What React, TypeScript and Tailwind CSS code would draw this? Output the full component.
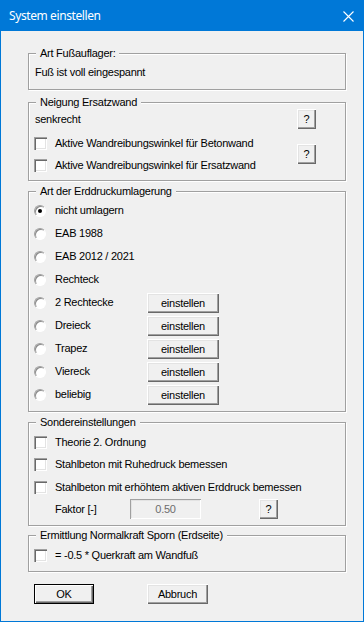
import React from 'react';

type GroupProps = {
    title: string;
    className?: string;
    children?: React.ReactNode;
};

function Group({ title, className = '', children }: GroupProps) {
    return (
        <div className={`relative border border-[#a0a0a0] shadow-[inset_1px_1px_0_#fff,1px_1px_0_#fff] ${className}`}>
            <span className="absolute -top-[8px] left-[7px] bg-[#f0f0f0] px-[4px] leading-[14px]">{title}</span>
            {children}
        </div>
    );
}

function Button({ label, className = '', isDefault = false }: { label: string; className?: string; isDefault?: boolean }) {
    const frame = isDefault
        ? 'border border-black shadow-[inset_1px_1px_0_#fff,inset_-1px_-1px_0_#696969,inset_-2px_-2px_0_#a0a0a0]'
        : 'shadow-[inset_1px_1px_0_#fff,inset_-1px_-1px_0_#696969,inset_-2px_-2px_0_#a0a0a0,inset_2px_2px_0_#e3e3e3]';
    return (
        <div className={`flex h-[20px] shrink-0 items-center justify-center bg-[#f0f0f0] leading-none ${frame} ${className}`}>
            {label}
        </div>
    );
}

function CheckBox() {
    return (
        <span className="block size-[13px] shrink-0 bg-white shadow-[inset_1px_1px_0_#a0a0a0,inset_2px_2px_0_#696969,inset_-1px_-1px_0_#fff,inset_-2px_-2px_0_#e3e3e3]" />
    );
}

function Radio({ checked = false }: { checked?: boolean }) {
    return (
        <span className="flex size-[12px] shrink-0 items-center justify-center rounded-full border border-t-[#a0a0a0] border-r-white border-b-white border-l-[#a0a0a0] bg-white shadow-[inset_1px_1px_0_#8a8a8a]">
            {checked && <span className="block size-[4px] rounded-full bg-black" />}
        </span>
    );
}

function CheckRow({ label, className = '' }: { label: string; className?: string }) {
    return (
        <div className={`flex items-center pl-[5px] ${className}`}>
            <CheckBox />
            <span className="ml-[8px] whitespace-nowrap">{label}</span>
        </div>
    );
}

const radios: { label: string; button?: boolean; checked?: boolean }[] = [
    { label: 'nicht umlagern', checked: true },
    { label: 'EAB 1988' },
    { label: 'EAB 2012 / 2021' },
    { label: 'Rechteck' },
    { label: '2 Rechtecke', button: true },
    { label: 'Dreieck', button: true },
    { label: 'Trapez', button: true },
    { label: 'Viereck', button: true },
    { label: 'beliebig', button: true },
];

export default function App() {
    return (
        <div className="flex h-[622px] w-[364px] flex-col bg-[#0078d7] font-['Liberation_Sans',Arial,sans-serif] text-[11px] tracking-[-0.25px] text-black">
            <div className="flex h-[31px] shrink-0 items-center justify-between pr-[10px] pl-[9px] font-['Noto_Sans',sans-serif] text-[12px] tracking-[-0.4px] text-white">
                <span>System einstellen</span>
                <svg width="11" height="11" viewBox="0 0 11 11" className="mt-[1px]">
                    <path d="M0.5 0.5 L10.5 10.5 M10.5 0.5 L0.5 10.5" stroke="#fff" strokeWidth="1.1" />
                </svg>
            </div>

            <div className="mx-[1px] mb-[1px] flex-1 bg-[#f0f0f0] pr-[17px] pl-[27px]">
                <Group title="Art Fußauflager:" className="mt-[22px] h-[37px] pt-[11px] pl-[6px]">
                    <div className="leading-[14px]">Fuß ist voll eingespannt</div>
                </Group>

                <Group title="Neigung Ersatzwand" className="mt-[12px] h-[79px] pt-[6px] pr-[29px]">
                    <div className="flex h-[20px] items-center justify-between pl-[6px]">
                        <span>senkrecht</span>
                        <Button label="?" className="w-[19px]" />
                    </div>
                    <div className="mt-[3px] flex items-center justify-between">
                        <div>
                            <CheckRow label="Aktive Wandreibungswinkel für Betonwand" className="h-[22px]" />
                            <CheckRow label="Aktive Wandreibungswinkel für Ersatzwand" className="h-[22px]" />
                        </div>
                        <Button label="?" className="w-[19px]" />
                    </div>
                </Group>

                <Group title="Art der Erddruckumlagerung" className="mt-[10px] h-[221px] pt-[7px]">
                    {radios.map((r) => (
                        <div key={r.label} className="flex h-[23px] items-center pl-[5px]">
                            <Radio checked={r.checked} />
                            <span className="ml-[9px] w-[92px] whitespace-nowrap">{r.label}</span>
                            {r.button && <Button label="einstellen" className="mt-[1px] w-[72px]" />}
                        </div>
                    ))}
                </Group>

                <Group title="Sondereinstellungen" className="mt-[10px] h-[104px] pt-[8px]">
                    <CheckRow label="Theorie 2. Ordnung" className="h-[22px]" />
                    <CheckRow label="Stahlbeton mit Ruhedruck bemessen" className="h-[23px]" />
                    <CheckRow label="Stahlbeton mit erhöhtem aktiven Erddruck bemessen" className="h-[22px]" />
                    <div className="mt-[1px] flex h-[20px] items-center pl-[26px]">
                        <span className="w-[75px]">Faktor [-]</span>
                        <div className="flex h-[20px] w-[71px] items-center justify-center bg-[#f0f0f0] text-[#6d6d6d] shadow-[inset_1px_1px_0_#a0a0a0,inset_-1px_-1px_0_#fff,inset_2px_2px_0_#e3e3e3]">
                            0.50
                        </div>
                        <Button label="?" className="ml-[58px] w-[19px]" />
                    </div>
                </Group>

                <Group title="Ermittlung Normalkraft Sporn (Erdseite)" className="mt-[9px] h-[37px] pt-[9px]">
                    <CheckRow label="= -0.5 * Querkraft am Wandfuß" className="h-[20px]" />
                </Group>

                <div className="mt-[12px] flex pl-[6px]">
                    <Button label="OK" isDefault className="w-[60px]" />
                    <Button label="Abbruch" className="ml-[53px] w-[61px]" />
                </div>
            </div>
        </div>
    );
}
